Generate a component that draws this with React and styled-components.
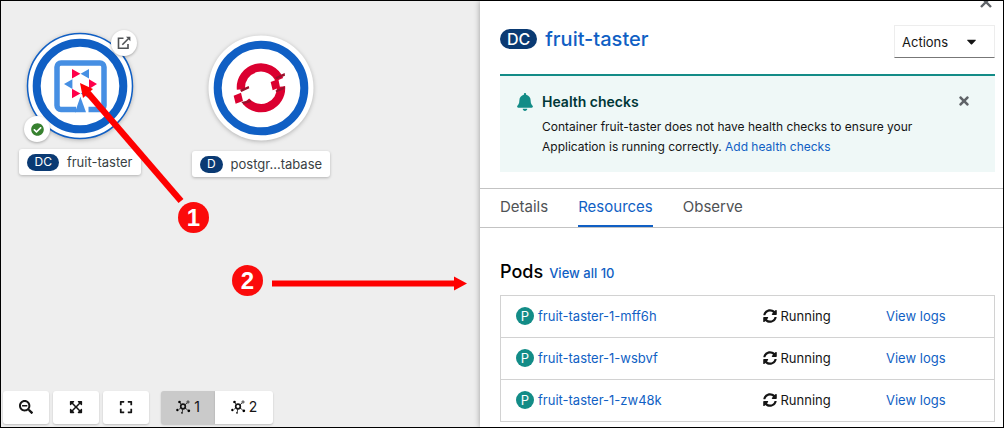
import React from "react";
import styled, { createGlobalStyle } from "styled-components";
import {
  FaBell,
  FaCaretDown,
  FaCheckCircle,
  FaExpand,
  FaExpandArrowsAlt,
  FaSearchMinus,
  FaSyncAlt,
  FaTimes,
} from "react-icons/fa";

const blue = "#105fc4";
const navy = "#0a3a73";
const teal = "#138c87";
const red = "#fe0000";

const GlobalStyle = createGlobalStyle`
  *, *::before, *::after { box-sizing: border-box; }
  body {
    margin: 0;
    color: #151515;
    font: 14px/20px Inter, "Liberation Sans", sans-serif;
  }
  button { font: inherit; color: inherit; cursor: pointer; }
  a { color: ${blue}; text-decoration: none; }
  h1, h2, h3, p { margin: 0; }
`;

const Frame = styled.div`
  display: grid;
  grid-template-columns: 479fr 523fr;
  min-height: 100vh;
  border: 1px solid #000;
`;

/* Topology canvas */

const Canvas = styled.main`
  position: relative;
  display: flex;
  flex-direction: column;
  justify-content: flex-end;
  overflow: hidden;
  padding: 2px 2px 3px;
  background: #eee;
`;

const Node = styled.figure`
  position: absolute;
  left: ${(p) => p.$x}px;
  top: ${(p) => p.$y}px;
  margin: 0;
  width: 140px;
  display: flex;
  flex-direction: column;
  align-items: center;
`;

const NodeDrawing = styled.svg`
  display: block;
  width: 120px;
  height: 120px;
  overflow: visible;
`;

const NodeLabel = styled.figcaption`
  display: flex;
  align-items: center;
  gap: 8px;
  height: 26px;
  margin-top: 3px;
  padding: 0 8px;
  border-radius: 3px;
  background: #fff;
  box-shadow: 0 1px 3px rgba(0, 0, 0, 0.25);
  color: #393f44;
  font-size: 13px;
  white-space: nowrap;
`;

const Kind = styled.span`
  display: inline-flex;
  align-items: center;
  justify-content: center;
  flex: none;
  height: ${(p) => (p.$large ? 20 : 17)}px;
  padding: 0 7px;
  border-radius: 20px;
  background: ${navy};
  color: #fff;
  font-size: ${(p) => (p.$large ? 16 : 12)}px;
`;

const Decorator = styled.button`
  position: absolute;
  left: ${(p) => p.$x}px;
  top: ${(p) => p.$y}px;
  display: flex;
  align-items: center;
  justify-content: center;
  width: 26px;
  height: 26px;
  padding: 0;
  border: 0;
  border-radius: 50%;
  background: #fff;
  box-shadow: 0 1px 3px rgba(0, 0, 0, 0.3);
  color: ${(p) => p.$color};
  font-size: 13px;
`;

const Arrows = styled.svg`
  position: absolute;
  left: 0;
  top: 0;
  width: 478px;
  height: 300px;
  pointer-events: none;
`;

const Callout = styled.span`
  position: absolute;
  left: ${(p) => p.$x}px;
  top: ${(p) => p.$y}px;
  width: 31px;
  height: 31px;
  border-radius: 50%;
  background: #fb0b0b;
  color: #fff;
  font: bold 24px/31px "Liberation Sans", Arial, sans-serif;
  text-align: center;
`;

const Toolbar = styled.div`
  display: flex;
  gap: 4px;
`;

const ToolButton = styled.button`
  display: flex;
  align-items: center;
  justify-content: center;
  gap: 3px;
  min-width: 46px;
  height: 33px;
  padding: 0 0 2px;
  border: 0;
  border-radius: 3px;
  background: #fff;
  box-shadow: 0 1px 2px rgba(0, 0, 0, 0.2);
`;

const ToggleGroup = styled.div`
  display: flex;
  margin-left: 8px;
`;

const Toggle = styled(ToolButton)`
  width: ${(p) => (p.$on ? 54 : 58)}px;
  border-radius: ${(p) => (p.$on ? "3px 0 0 3px" : "0 3px 3px 0")};
  background: ${(p) => (p.$on ? "#cacaca" : "#fff")};
`;

/* Side panel */

const Panel = styled.aside`
  position: relative;
  background: #fff;
  box-shadow: 0 0 6px rgba(0, 0, 0, 0.35);
`;

const CloseBar = styled.div`
  display: flex;
  justify-content: flex-end;
  align-items: flex-end;
  height: 8px;
  padding-right: 9px;
  overflow: hidden;
`;

const IconButton = styled.button`
  display: flex;
  padding: 0;
  border: 0;
  background: none;
  color: #5f6368;
`;

const Header = styled.header`
  display: flex;
  align-items: flex-start;
  justify-content: space-between;
  padding: 16px 8px 16px 20px;
`;

const Title = styled.h1`
  display: flex;
  align-items: center;
  gap: 8px;
  height: 28px;
  color: ${blue};
  font-size: 20px;
  font-weight: 500;
`;

const ActionsButton = styled.button`
  display: flex;
  align-items: center;
  justify-content: space-between;
  width: 101px;
  height: 33px;
  padding: 0 15px 0 7px;
  border: 1px solid #ededed;
  border-bottom-color: #777;
  background: #fff;
  font-size: 13px;

  svg { font-size: 15px; }
`;

const Alert = styled.section`
  display: grid;
  grid-template-columns: 16px 1fr auto;
  column-gap: 9px;
  margin: 0 8px 16px 20px;
  padding: 16px 24px 15px 17px;
  border-top: 2px solid ${teal};
  background: #eff8f7;
  font-size: 12px;
`;

const AlertIcon = styled.div`
  display: flex;
  padding-top: 1px;
  color: ${teal};
  font-size: 18px;
`;

const AlertTitle = styled.h2`
  margin-bottom: 5px;
  color: #003737;
  font-size: 14px;
  line-height: 20px;
  font-weight: 600;
`;

const AlertClose = styled(IconButton)`
  align-self: start;
  padding-top: 2px;
  font-size: 14px;
`;

const AlertText = styled.p`
  max-width: 390px;
`;

const Tabs = styled.nav`
  display: flex;
  gap: 30px;
  padding: 0 20px;
  border: 1px solid #c3c3c3;
  border-width: 1px 0;
`;

const Tab = styled.a`
  height: 38px;
  border-bottom: 2px solid ${(p) => (p.$current ? blue : "transparent")};
  color: ${(p) => (p.$current ? blue : "#4f5255")};
  font-size: 15px;
  line-height: 36px;
`;

const SectionHead = styled.div`
  display: flex;
  align-items: baseline;
  gap: 6px;
  padding: 32px 20px 11px;
`;

const SectionTitle = styled.h2`
  color: #000;
  font-size: 18px;
  line-height: 24px;
  font-weight: 500;
`;

const ViewAll = styled.a`
  font-size: 13px;
  font-weight: 500;
`;

const TableWrap = styled.div`
  padding: 0 8px 0 20px;
`;

const PodTable = styled.table`
  width: 100%;
  border-collapse: collapse;
  table-layout: fixed;
  border: 1px solid #d2d2d2;
  font-size: 13px;
`;

const PodRow = styled.tr`
  height: 42px;
  border-top: 1px solid #d2d2d2;
`;

const Cell = styled.td`
  width: ${(p) => p.$width};
  padding: 0 0 2px 15px;
  white-space: nowrap;

  svg { font-size: 14px; }
`;

const CellContent = styled.div`
  display: flex;
  align-items: center;
  gap: 4px;
`;

const PodBadge = styled.span`
  width: 18px;
  height: 18px;
  border-radius: 50%;
  background: ${teal};
  color: #fff;
  line-height: 18px;
  text-align: center;
`;

const pods = ["fruit-taster-1-mff6h", "fruit-taster-1-wsbvf", "fruit-taster-1-zw48k"];

function QuarkusLogo() {
  return (
    <g>
      <path
        d="M56 83.500H41a4 4 0 0 1-4-4V41a4 4 0 0 1 4-4h39a4 4 0 0 1 4 4v38.500a4 4 0 0 1-4 4H68.500"
        fill="none"
        stroke="#468fe3"
        strokeWidth="5.500"
      />
      <path d="M60.400 70.700 66 86.250H55z" fill="#468fe3" />
      <g fill="#ff004a">
        <path d="M52 43v9.400l8.400-4.700zM77 58l-8-4.700v9.700zM52 62.700v9.600l8.400-4.900z" />
      </g>
      <g fill="#468fe3">
        <path d="M69 43v9.400l-8.400-4.700zM44 58l8.400-4.700v9.700zM69 62.700v9.600l-8.400-4.900z" />
      </g>
    </g>
  );
}

function OpenShiftLogo() {
  return (
    <g transform="translate(-32 -8) scale(.3333)">
      <g fill="none" stroke="#db0030" strokeWidth="25">
        <path d="M216 208A60 60 0 0 1 331 179" />
        <path d="M336 200A60 60 0 0 1 231 244" />
      </g>
      <path d="M305 186l23-9 5 25-22 9zM194 227l22-9 6 25-22 8z" fill="#db0030" />
      <path
        d="M319 172l28-13 1 8-25 11zM319 212l29-14-2 9-23 10zM213 209l26-11 2 7-24 11zM217 246l27-6 3 6-24 7z"
        fill="#9b0f2b"
      />
    </g>
  );
}

function TopologyIcon() {
  return (
    <svg width="15" height="14" viewBox="0 0 15 14" aria-hidden="true">
      <g fill="none" stroke="#151515">
        <circle cx="7" cy="6.500" r="2.300" strokeWidth="1.700" />
        <circle cx="12" cy="2" r="1.100" strokeWidth=".8" />
        <path d="M4 3l1.500 1.500M9 4.800l2-1.800M9 8.200l2.500 1.500M4.800 8L3 9.300M6.700 9l-.4 3" strokeWidth=".8" />
      </g>
      <circle cx="3.500" cy="2" r="1.300" />
      <circle cx="1.400" cy="10" r="1.200" />
      <circle cx="12.800" cy="10.800" r="1.400" />
      <circle cx="6" cy="12.800" r=".9" />
    </svg>
  );
}

function TopologyNode({ x, y, kind, name, selected, children }) {
  return (
    <Node $x={x} $y={y}>
      <NodeDrawing viewBox="0 0 120 120" aria-hidden="true">
        <circle
          cx="60"
          cy="60"
          r="52.500"
          fill="#fff"
          stroke={selected ? blue : "none"}
          strokeWidth="1.500"
          filter="drop-shadow(0 1px 2px rgba(0,0,0,.25))"
        />
        <circle cx="60" cy="60" r="43.300" fill="none" stroke={blue} strokeWidth="8" />
        {children}
      </NodeDrawing>
      <NodeLabel>
        <Kind>{kind}</Kind>
        {name}
      </NodeLabel>
    </Node>
  );
}

export default function App() {
  return (
    <Frame>
      <GlobalStyle />
      <Canvas>
        <TopologyNode x={9} y={25} kind="DC" name="fruit-taster" selected>
          <QuarkusLogo />
        </TopologyNode>
        <Decorator $x={110} $y={29} $color="#4f5255" aria-label="Open URL">
          <svg width="14" height="14" viewBox="0 0 14 14" fill="none" stroke="currentColor" strokeWidth="1.600">
            <path d="M6.500 2.300H1.500v10h9.500V8" />
            <path d="M5.300 8.800l6-6" />
            <path d="M9 .8h4.400v4.400z" fill="currentColor" stroke="none" />
          </svg>
        </Decorator>
        <Decorator $x={23} $y={115} $color="#37812f" aria-label="Build complete">
          <FaCheckCircle />
        </Decorator>
        <TopologyNode x={190} y={27} kind="D" name="postgr...tabase">
          <OpenShiftLogo />
        </TopologyNode>

        <Arrows viewBox="0 0 478 300" fill={red} aria-hidden="true">
          <path d="M87 92l93 108" stroke={red} strokeWidth="6.500" />
          <path d="M79 82l13 6L82 97z" />
          <path d="M271 279.500h182v-4l13 7-13 7v-4H271z" />
        </Arrows>
        <Callout $x={177} $y={201}>1</Callout>
        <Callout $x={231} $y={264}>2</Callout>

        <Toolbar>
          <ToolButton aria-label="Zoom out"><FaSearchMinus /></ToolButton>
          <ToolButton aria-label="Fit to screen"><FaExpandArrowsAlt /></ToolButton>
          <ToolButton aria-label="Reset view"><FaExpand /></ToolButton>
          <ToggleGroup>
            <Toggle $on><TopologyIcon />1</Toggle>
            <Toggle><TopologyIcon />2</Toggle>
          </ToggleGroup>
        </Toolbar>
      </Canvas>

      <Panel>
        <CloseBar>
          <IconButton aria-label="Close">
            <svg width="16" height="16" viewBox="0 0 16 16" fill="none" stroke="currentColor" strokeWidth="2.400">
              <path d="M3 4l10 10M13 4L3 14" />
            </svg>
          </IconButton>
        </CloseBar>
        <Header>
          <Title>
            <Kind $large>DC</Kind>
            <a href="#fruit-taster">fruit-taster</a>
          </Title>
          <ActionsButton>
            Actions <FaCaretDown />
          </ActionsButton>
        </Header>
        <Alert>
          <AlertIcon><FaBell /></AlertIcon>
          <div>
            <AlertTitle>Health checks</AlertTitle>
            <AlertText>
              Container fruit-taster does not have health checks to ensure your
              Application is running correctly. <a href="#health">Add health checks</a>
            </AlertText>
          </div>
          <AlertClose aria-label="Dismiss"><FaTimes /></AlertClose>
        </Alert>
        <Tabs>
          <Tab href="#details">Details</Tab>
          <Tab href="#resources" $current>Resources</Tab>
          <Tab href="#observe">Observe</Tab>
        </Tabs>
        <SectionHead>
          <SectionTitle>Pods</SectionTitle>
          <ViewAll href="#pods">View all 10</ViewAll>
        </SectionHead>
        <TableWrap>
          <PodTable>
            <tbody>
              {pods.map((pod) => (
                <PodRow key={pod}>
                  <Cell $width="50%">
                    <CellContent>
                      <PodBadge>P</PodBadge>
                      <a href={`#${pod}`}>{pod}</a>
                    </CellContent>
                  </Cell>
                  <Cell $width="25%">
                    <CellContent><FaSyncAlt /> Running</CellContent>
                  </Cell>
                  <Cell $width="25%">
                    <a href={`#${pod}-logs`}>View logs</a>
                  </Cell>
                </PodRow>
              ))}
            </tbody>
          </PodTable>
        </TableWrap>
      </Panel>
    </Frame>
  );
}
